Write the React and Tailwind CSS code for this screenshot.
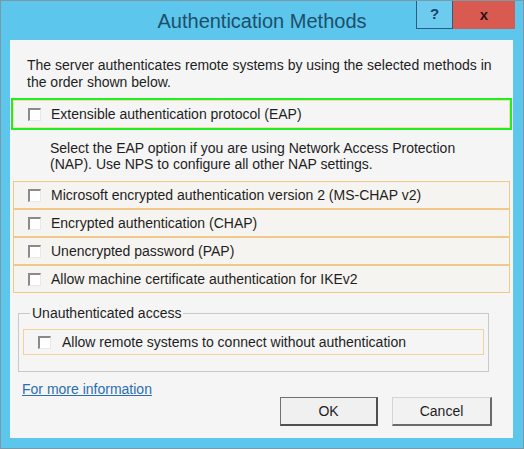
import React from 'react';

const Check = () => (
  <span className="w-[13px] h-[13px] shrink-0 border-t-2 border-l-2 border-[#8a8a8a] border-r border-b border-r-[#e8e8e8] border-b-[#e8e8e8] bg-white" />
);

const Row = ({ children }) => (
  <div className="h-[28px] mx-[3px] flex items-center gap-[10px] pl-[14px] border border-[#f0c98a] bg-[#f6f4f0]">
    <Check />
    <span>{children}</span>
  </div>
);

export default function App() {
  return (
    <div className="w-[524px] h-[449px] flex flex-col bg-[#5cc6ec] border border-[#7a9aa8] font-['Liberation_Sans',Arial,sans-serif] text-[14px] text-[#1e1e1e] overflow-hidden">
      {/* title bar */}
      <div className="relative h-[39px] shrink-0 flex items-center justify-center">
        <span className="text-[20px] text-[#1d4f6b]">Authentication Methods</span>
        <div className="absolute top-0 right-[8px] flex h-[28px]">
          <div className="w-[37px] flex items-center justify-center border border-t-0 border-[#2a5d82] bg-[#6ccbef] text-[#1d3f6b] font-bold text-[15px]">?</div>
          <div className="w-[62px] flex items-center justify-center bg-[#d85a50] text-[#2a1414] font-bold text-[15px]">x</div>
        </div>
      </div>

      {/* content */}
      <div className="h-[398px] ml-[9px] mr-[10px] bg-[#f5f5f5] flex flex-col">
        <p className="pt-[17px] pl-[17px] pr-[16px] leading-[17px]">
          The server authenticates remote systems by using the selected methods in the order shown below.
        </p>

        <div className="mt-[7px] mx-[1px] h-[32px] border-2 border-[#1ef01e]">
          <div className="h-full flex items-center gap-[10px] pl-[14px] border border-[#f3dcb0]">
            <Check />
            <span>Extensible authentication protocol (EAP)</span>
          </div>
        </div>

        <p className="mt-[10px] pl-[40px] pr-[40px] leading-[16px]">
          Select the EAP option if you are using Network Access Protection (NAP). Use NPS to configure all other NAP settings.
        </p>

        <div className="mt-[9px] flex flex-col">
          <Row>Microsoft encrypted authentication version 2 (MS-CHAP v2)</Row>
          <Row>Encrypted authentication (CHAP)</Row>
          <Row>Unencrypted password (PAP)</Row>
          <Row>Allow machine certificate authentication for IKEv2</Row>
        </div>

        <fieldset className="mt-[13px] ml-[8px] w-[471px] h-[66px] border border-[#c9c9c9] px-[4px]">
          <legend className="ml-[7px] px-[2px] leading-[14px]">Unauthenticated access</legend>
          <div className="mt-[9px] h-[26px] flex items-center gap-[11px] pl-[14px] border border-[#f0d29c]">
            <Check />
            <span>Allow remote systems to connect without authentication</span>
          </div>
        </fieldset>

        <div className="mt-[9px] pl-[12px] leading-[16px]">
          <a className="text-[#2a6fb0] underline">For more information</a>
        </div>

        <div className="flex gap-[14px] pl-[270px]">
          <button className="w-[98px] h-[29px] bg-[#f0f0f0] border border-[#707070] border-r-2 border-b-2 border-r-[#505050] border-b-[#505050]">OK</button>
          <button className="w-[100px] h-[29px] bg-[#f2f2f2] border border-[#d4d4d4] border-r-2 border-b-2 border-r-[#6a6a6a] border-b-[#6a6a6a]">Cancel</button>
        </div>
      </div>
    </div>
  );
}
